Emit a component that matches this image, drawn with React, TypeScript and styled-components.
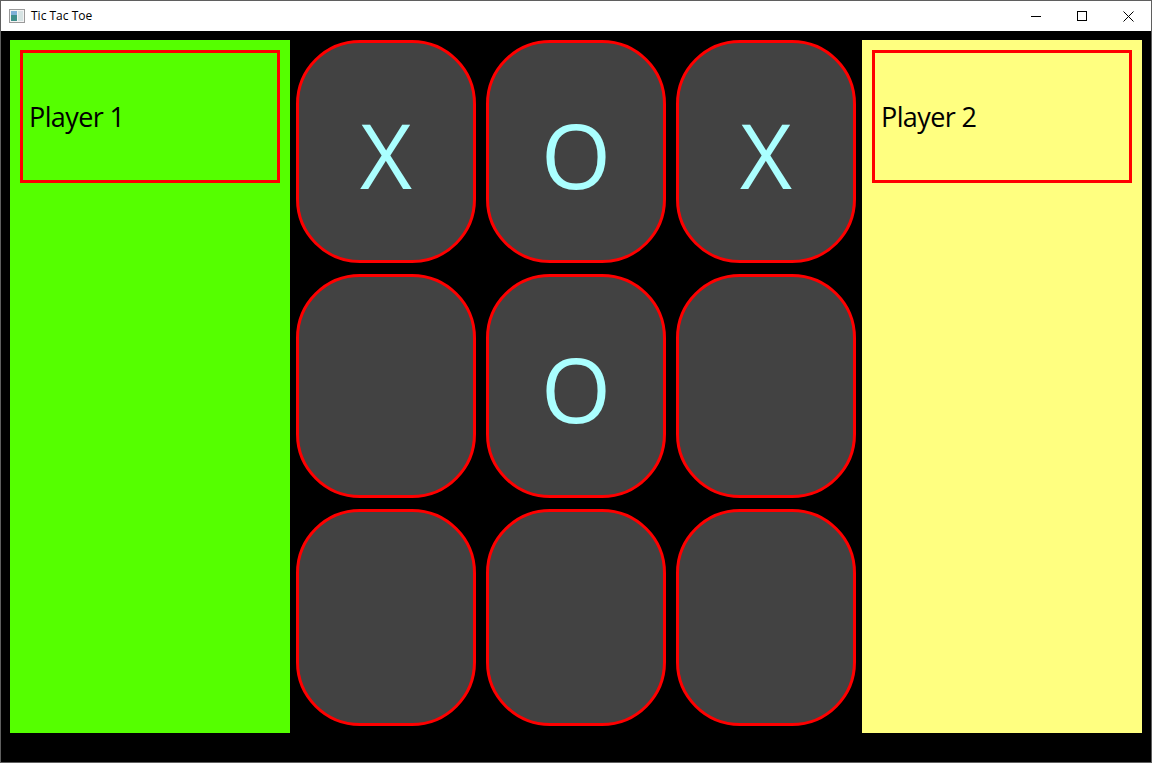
import React from 'react';
import styled, { createGlobalStyle } from 'styled-components';

const GlobalStyle = createGlobalStyle`
    html, body {
        margin: 0;
        padding: 0;
        background: #ffffff;
    }
    * {
        box-sizing: border-box;
    }
`;

const Window = styled.div`
    width: 1152px;
    height: 763px;
    border: 1px solid #5f5f5f;
    display: flex;
    flex-direction: column;
    overflow: hidden;
    font-family: "Open Sans", "Noto Sans", sans-serif;
`;

const TitleBar = styled.div`
    height: 30px;
    flex: none;
    display: flex;
    align-items: center;
    background: #ffffff;
    padding-left: 8px;
`;

const TitleText = styled.span`
    margin-left: 6px;
    font-size: 12px;
    color: #000000;
    flex: 1;
    margin-top: -1px;
`;

const Controls = styled.div`
    display: flex;
    height: 100%;
`;

const ControlButton = styled.div`
    width: 46px;
    height: 100%;
    display: flex;
    align-items: center;
    justify-content: center;
`;

const Content = styled.div`
    flex: 1;
    background: #000000;
    display: flex;
    padding: 9px 9px 29px 9px;
`;

const PlayerPanel = styled.div<{ $bg: string }>`
    width: 280px;
    flex: none;
    background: ${props => props.$bg};
    padding: 10px;
`;

const PlayerBox = styled.div`
    height: 133px;
    border: 3px solid #ff0000;
    display: flex;
    align-items: center;
    padding-left: 6px;
    font-size: 27px;
    letter-spacing: -0.6px;
    color: #000000;
`;

const Board = styled.div`
    flex: 1;
    display: grid;
    grid-template-columns: repeat(3, 1fr);
    grid-template-rows: 223px 224px 217px;
    column-gap: 10px;
    row-gap: 11px;
    padding: 0 6px 6px 6px;
`;

const Cell = styled.div`
    background: #424242;
    border: 3px solid #ff0000;
    border-radius: 64px;
    display: flex;
    align-items: center;
    justify-content: center;
    color: #aaffff;
    font-size: 90px;
    line-height: 1;
    padding-top: 4px;
`;

const AppIcon = () => (
  <svg width="16" height="14" viewBox="0 0 16 14">
    <rect x="0.5" y="0.5" width="15" height="13" fill="#f4f4f4" stroke="#9a9a9a" />
    <rect x="2" y="2" width="6" height="10" fill="#3f8f8a" />
    <rect x="2" y="2" width="6" height="4" fill="#7fb0d8" />
    <rect x="9" y="2" width="5" height="10" fill="#d6e3e3" />
  </svg>
);

const board = ['X', 'O', 'X', '', 'O', '', '', '', ''];

function App() {
  return (
    <>
      <GlobalStyle />
      <Window>
        <TitleBar>
          <AppIcon />
          <TitleText>Tic Tac Toe</TitleText>
          <Controls>
            <ControlButton>
              <svg width="10" height="10" viewBox="0 0 10 10">
                <line x1="0" y1="5.5" x2="10" y2="5.5" stroke="#000" strokeWidth="1" />
              </svg>
            </ControlButton>
            <ControlButton>
              <svg width="10" height="10" viewBox="0 0 10 10">
                <rect x="0.5" y="0.5" width="9" height="9" fill="none" stroke="#000" strokeWidth="1" />
              </svg>
            </ControlButton>
            <ControlButton>
              <svg width="11" height="11" viewBox="0 0 11 11">
                <path d="M0.5 0.5 L10.5 10.5 M10.5 0.5 L0.5 10.5" stroke="#000" strokeWidth="1" />
              </svg>
            </ControlButton>
          </Controls>
        </TitleBar>
        <Content>
          <PlayerPanel $bg="#55ff00">
            <PlayerBox>Player 1</PlayerBox>
          </PlayerPanel>
          <Board>
            {board.map((mark, i) => (
              <Cell key={i}>{mark}</Cell>
            ))}
          </Board>
          <PlayerPanel $bg="#ffff80">
            <PlayerBox>Player 2</PlayerBox>
          </PlayerPanel>
        </Content>
      </Window>
    </>
  );
}

export default App;
